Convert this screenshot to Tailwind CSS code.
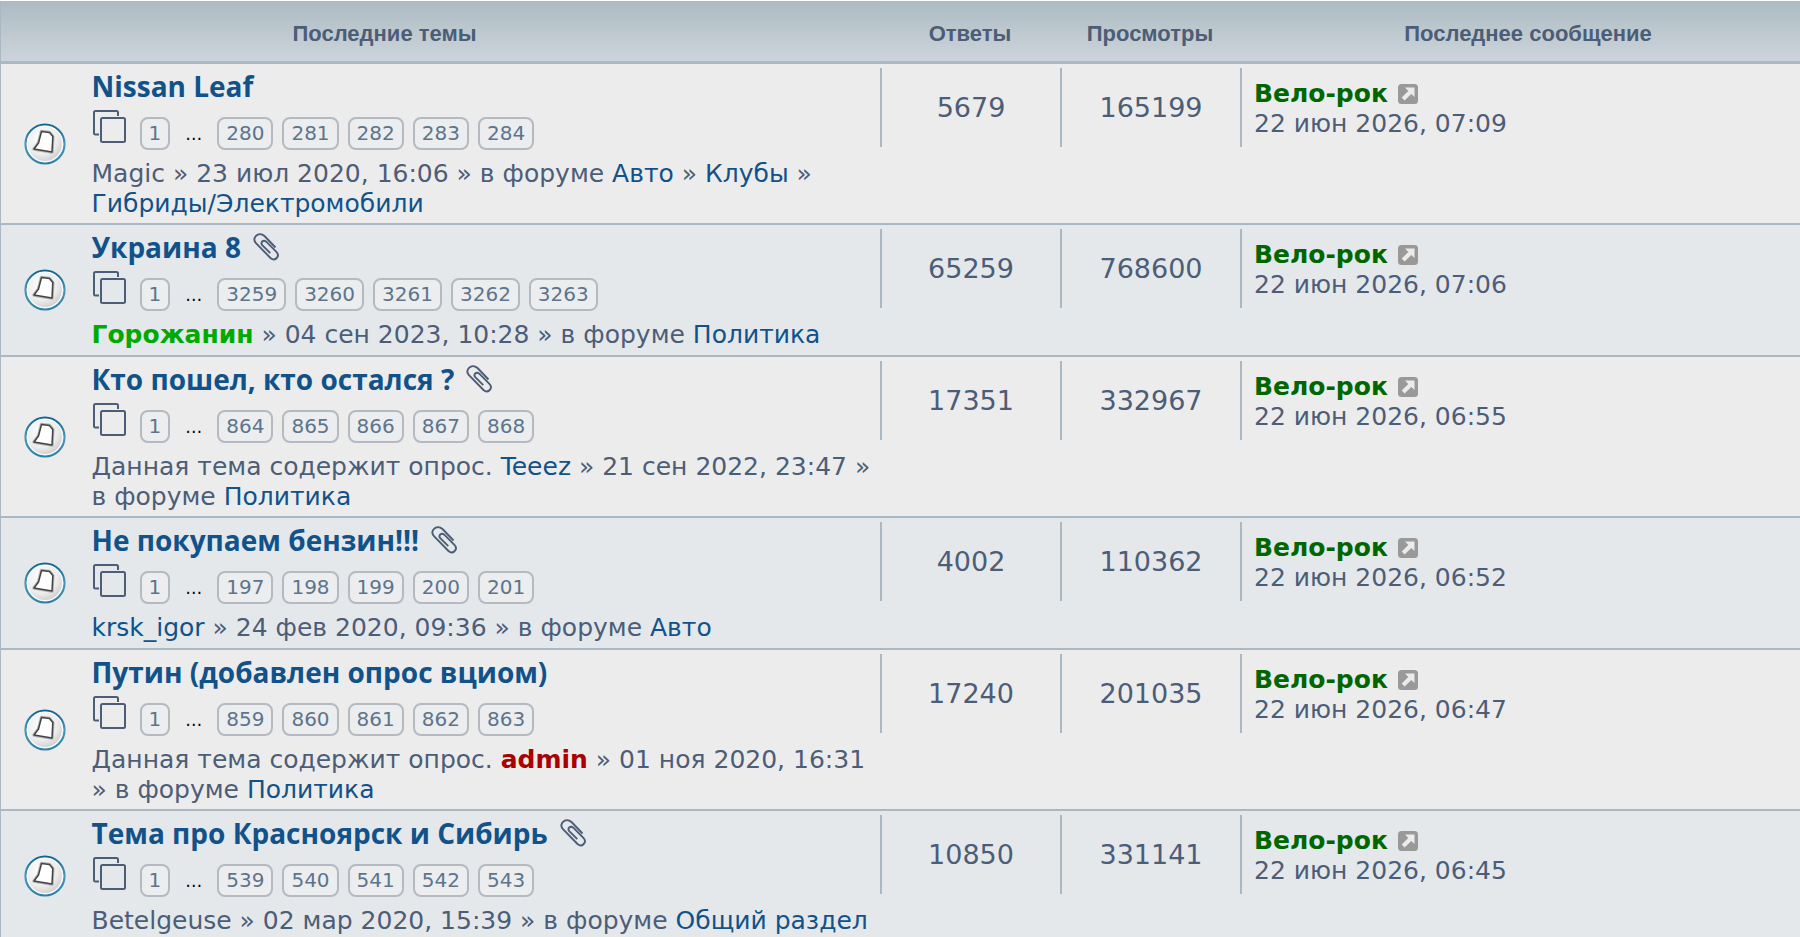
<!DOCTYPE html>
<html lang="ru">
<head>
<meta charset="utf-8">
<title>Последние темы</title>
<script src="https://cdn.jsdelivr.net/npm/@tailwindcss/browser@4"></script>
</head>
<body class="bg-white pt-px font-['DejaVu_Sans',sans-serif] text-[25px] leading-[30px] text-[#4c5d77]">
<svg class="absolute size-0" aria-hidden="true">
  <defs>
    <radialGradient id="disc" cx="0.4" cy="0.35" r="0.7"><stop offset="0" stop-color="#ffffff"/><stop offset="0.6" stop-color="#ececec"/><stop offset="1" stop-color="#c4c4c4"/></radialGradient>
    <linearGradient id="ring" x1="0" y1="0" x2="0" y2="1"><stop offset="0" stop-color="#0f6492"/><stop offset="0.5" stop-color="#4a96b8"/><stop offset="1" stop-color="#2a80a8"/></linearGradient>
  </defs>
  <symbol id="bell" viewBox="0 0 42 42">
    <circle cx="21" cy="21" r="19.5" fill="url(#disc)" stroke="url(#ring)" stroke-width="2.2"/>
    <circle cx="21" cy="21" r="17.6" fill="none" stroke="#f6fafc" stroke-width="1.4"/>
    <path d="M17.5 8.5 L25.5 9.5 L28.8 13.5 L28 29 L10 26 L14.5 20 Z" fill="#fff" stroke="#8a8a8a" stroke-opacity="0.6" stroke-width="3.4" stroke-linejoin="round"/>
    <path d="M17.5 8.5 L25.5 9.5 L28.8 13.5 L28 29 L10 26 L14.5 20 Z" fill="#fff" stroke="#444" stroke-width="1.5" stroke-linejoin="round"/>
  </symbol>
  <symbol id="pages" viewBox="0 0 34 34">
    <path d="M26 7 V3.5 Q26 2 24.5 2 H3.5 Q2 2 2 3.5 V24 Q2 25.5 3.5 25.5 H7" fill="none" stroke="#4c5d77" stroke-width="2"/>
    <rect x="9" y="9" width="24" height="24" rx="1.5" fill="none" stroke="#4c5d77" stroke-width="2"/>
  </symbol>
  <symbol id="clip" viewBox="0 0 26 28">
    <path d="M22.5 14.5 L11.5 3 C8.5 0.3 5 0.8 3 2.8 C0.8 5 1 8 3.2 10.4 L17.5 25 C19.5 26.8 22 26.8 23.7 25 C25.4 23.2 25.2 20.8 23.4 18.9 L13.3 8.7 C11.8 7.4 10.2 7.5 9.2 8.5 C8.2 9.6 8.2 11 9.5 12.4 L17.3 20.2" fill="none" stroke="#4c5d77" stroke-width="1.9"/>
  </symbol>
  <symbol id="go" viewBox="0 0 20 20">
    <rect width="20" height="20" rx="3.5" fill="#999"/>
    <path d="M7 3.5 H16.5 V13 L13.3 9.9 L6.6 16.5 L3.7 13.6 L10.3 6.9 Z" fill="#ebebeb"/>
  </symbol>
</svg>

<table class="w-full table-fixed border-collapse border-l border-[#a9b8c2]">
  <colgroup><col class="w-[91px]"><col><col class="w-[180px]"><col class="w-[180px]"><col class="w-[560px]"></colgroup>
  <thead>
    <tr class="h-[62px] border-b-2 border-[#a9b8c2] bg-linear-to-b from-[#acbac3] via-[#bdc8ce] to-[#cdd3dc] font-['Liberation_Sans',Arial,sans-serif] text-[22px] [&>th]:pt-1 [&>th]:font-bold">
      <th colspan="2" class="pr-[112px]">Последние темы</th>
      <th>Ответы</th>
      <th>Просмотры</th>
      <th class="pl-4">Последнее сообщение</th>
    </tr>
  </thead>
  <tbody class="[&>tr]:h-[132px] [&>tr]:border-b-2 [&>tr]:border-[#a9b8c2] [&>tr:nth-child(odd)]:bg-[#ececec] [&>tr:nth-child(even)]:bg-[#e4e8eb] [&_td]:align-top [&_td:first-child]:align-middle [&_a]:text-[#105289]">

    <tr>
      <td><svg class="ml-[23px] size-[42px]"><use href="#bell"/></svg></td>
      <td class="pt-1 pb-1 whitespace-nowrap">
        <div class="flex h-9 items-center gap-3 font-['Open_Sans',sans-serif] text-[28px] font-bold"><a href="#">Nissan Leaf</a></div>
        <div class="flex h-[50px] gap-[9px] pt-[13px] text-[20px] leading-[29px] [&>a]:h-[33px] [&>a]:rounded-lg [&>a]:border-2 [&>a]:border-[#b4bac0] [&>a]:bg-[#ecedee] [&>a]:px-[7px] [&>a]:text-[#5c758c]">
          <svg class="-mt-2 mr-[5px] size-[34px]"><use href="#pages"/></svg>
          <a href="#">1</a><span class="w-[29px] pt-[3px] text-center text-[17px] text-black">…</span><a href="#">280</a><a href="#">281</a><a href="#">282</a><a href="#">283</a><a href="#">284</a>
        </div>
        <div class="pt-[5px]">Magic » 23 июл 2020, 16:06 » в форуме <a href="#">Авто</a> » <a href="#">Клубы</a> »<br><a href="#">Гибриды/Электромобили</a></div>
      </td>
      <td class="pt-1"><div class="h-[79px] border-l-2 border-[#a9b8c2] pt-[25px] text-center text-[27px]">5679</div></td>
      <td class="pt-1"><div class="h-[79px] border-l-2 border-[#a9b8c2] pt-[25px] text-center text-[27px]">165199</div></td>
      <td class="pt-1"><div class="h-[79px] border-l-2 border-[#a9b8c2] pt-[11px] pl-3"><div class="flex items-center gap-2.5"><a href="#" class="font-bold text-[#006600]!">Вело-рок</a><a href="#" aria-label="Перейти к последнему сообщению"><svg class="size-5"><use href="#go"/></svg></a></div><div>22 июн 2026, 07:09</div></div></td>
    </tr>

    <tr>
      <td><svg class="ml-[23px] size-[42px]"><use href="#bell"/></svg></td>
      <td class="pt-1 pb-1 whitespace-nowrap">
        <div class="flex h-9 items-center gap-3 font-['Open_Sans',sans-serif] text-[28px] font-bold"><a href="#">Украина 8</a><svg class="h-7 w-[26px]"><use href="#clip"/></svg></div>
        <div class="flex h-[50px] gap-[9px] pt-[13px] text-[20px] leading-[29px] [&>a]:h-[33px] [&>a]:rounded-lg [&>a]:border-2 [&>a]:border-[#b4bac0] [&>a]:bg-[#ecedee] [&>a]:px-[7px] [&>a]:text-[#5c758c]">
          <svg class="-mt-2 mr-[5px] size-[34px]"><use href="#pages"/></svg>
          <a href="#">1</a><span class="w-[29px] pt-[3px] text-center text-[17px] text-black">…</span><a href="#">3259</a><a href="#">3260</a><a href="#">3261</a><a href="#">3262</a><a href="#">3263</a>
        </div>
        <div class="pt-[5px]"><a href="#" class="font-bold text-[#00aa00]!">Горожанин</a> » 04 сен 2023, 10:28 » в форуме <a href="#">Политика</a></div>
      </td>
      <td class="pt-1"><div class="h-[79px] border-l-2 border-[#a9b8c2] pt-[25px] text-center text-[27px]">65259</div></td>
      <td class="pt-1"><div class="h-[79px] border-l-2 border-[#a9b8c2] pt-[25px] text-center text-[27px]">768600</div></td>
      <td class="pt-1"><div class="h-[79px] border-l-2 border-[#a9b8c2] pt-[11px] pl-3"><div class="flex items-center gap-2.5"><a href="#" class="font-bold text-[#006600]!">Вело-рок</a><a href="#" aria-label="Перейти к последнему сообщению"><svg class="size-5"><use href="#go"/></svg></a></div><div>22 июн 2026, 07:06</div></div></td>
    </tr>

    <tr>
      <td><svg class="ml-[23px] size-[42px]"><use href="#bell"/></svg></td>
      <td class="pt-1 pb-1 whitespace-nowrap">
        <div class="flex h-9 items-center gap-3 font-['Open_Sans',sans-serif] text-[28px] font-bold"><a href="#">Кто пошел, кто остался ?</a><svg class="h-7 w-[26px]"><use href="#clip"/></svg></div>
        <div class="flex h-[50px] gap-[9px] pt-[13px] text-[20px] leading-[29px] [&>a]:h-[33px] [&>a]:rounded-lg [&>a]:border-2 [&>a]:border-[#b4bac0] [&>a]:bg-[#ecedee] [&>a]:px-[7px] [&>a]:text-[#5c758c]">
          <svg class="-mt-2 mr-[5px] size-[34px]"><use href="#pages"/></svg>
          <a href="#">1</a><span class="w-[29px] pt-[3px] text-center text-[17px] text-black">…</span><a href="#">864</a><a href="#">865</a><a href="#">866</a><a href="#">867</a><a href="#">868</a>
        </div>
        <div class="pt-[5px]">Данная тема содержит опрос. <a href="#">Teeez</a> » 21 сен 2022, 23:47 »<br>в форуме <a href="#">Политика</a></div>
      </td>
      <td class="pt-1"><div class="h-[79px] border-l-2 border-[#a9b8c2] pt-[25px] text-center text-[27px]">17351</div></td>
      <td class="pt-1"><div class="h-[79px] border-l-2 border-[#a9b8c2] pt-[25px] text-center text-[27px]">332967</div></td>
      <td class="pt-1"><div class="h-[79px] border-l-2 border-[#a9b8c2] pt-[11px] pl-3"><div class="flex items-center gap-2.5"><a href="#" class="font-bold text-[#006600]!">Вело-рок</a><a href="#" aria-label="Перейти к последнему сообщению"><svg class="size-5"><use href="#go"/></svg></a></div><div>22 июн 2026, 06:55</div></div></td>
    </tr>

    <tr>
      <td><svg class="ml-[23px] size-[42px]"><use href="#bell"/></svg></td>
      <td class="pt-1 pb-1 whitespace-nowrap">
        <div class="flex h-9 items-center gap-3 font-['Open_Sans',sans-serif] text-[28px] font-bold"><a href="#">Не покупаем бензин!!!</a><svg class="h-7 w-[26px]"><use href="#clip"/></svg></div>
        <div class="flex h-[50px] gap-[9px] pt-[13px] text-[20px] leading-[29px] [&>a]:h-[33px] [&>a]:rounded-lg [&>a]:border-2 [&>a]:border-[#b4bac0] [&>a]:bg-[#ecedee] [&>a]:px-[7px] [&>a]:text-[#5c758c]">
          <svg class="-mt-2 mr-[5px] size-[34px]"><use href="#pages"/></svg>
          <a href="#">1</a><span class="w-[29px] pt-[3px] text-center text-[17px] text-black">…</span><a href="#">197</a><a href="#">198</a><a href="#">199</a><a href="#">200</a><a href="#">201</a>
        </div>
        <div class="pt-[5px]"><a href="#">krsk_igor</a> » 24 фев 2020, 09:36 » в форуме <a href="#">Авто</a></div>
      </td>
      <td class="pt-1"><div class="h-[79px] border-l-2 border-[#a9b8c2] pt-[25px] text-center text-[27px]">4002</div></td>
      <td class="pt-1"><div class="h-[79px] border-l-2 border-[#a9b8c2] pt-[25px] text-center text-[27px]">110362</div></td>
      <td class="pt-1"><div class="h-[79px] border-l-2 border-[#a9b8c2] pt-[11px] pl-3"><div class="flex items-center gap-2.5"><a href="#" class="font-bold text-[#006600]!">Вело-рок</a><a href="#" aria-label="Перейти к последнему сообщению"><svg class="size-5"><use href="#go"/></svg></a></div><div>22 июн 2026, 06:52</div></div></td>
    </tr>

    <tr>
      <td><svg class="ml-[23px] size-[42px]"><use href="#bell"/></svg></td>
      <td class="pt-1 pb-1 whitespace-nowrap">
        <div class="flex h-9 items-center gap-3 font-['Open_Sans',sans-serif] text-[28px] font-bold"><a href="#">Путин (добавлен опрос вциом)</a></div>
        <div class="flex h-[50px] gap-[9px] pt-[13px] text-[20px] leading-[29px] [&>a]:h-[33px] [&>a]:rounded-lg [&>a]:border-2 [&>a]:border-[#b4bac0] [&>a]:bg-[#ecedee] [&>a]:px-[7px] [&>a]:text-[#5c758c]">
          <svg class="-mt-2 mr-[5px] size-[34px]"><use href="#pages"/></svg>
          <a href="#">1</a><span class="w-[29px] pt-[3px] text-center text-[17px] text-black">…</span><a href="#">859</a><a href="#">860</a><a href="#">861</a><a href="#">862</a><a href="#">863</a>
        </div>
        <div class="pt-[5px]">Данная тема содержит опрос. <a href="#" class="font-bold text-[#aa0000]!">admin</a> » 01 ноя 2020, 16:31<br>» в форуме <a href="#">Политика</a></div>
      </td>
      <td class="pt-1"><div class="h-[79px] border-l-2 border-[#a9b8c2] pt-[25px] text-center text-[27px]">17240</div></td>
      <td class="pt-1"><div class="h-[79px] border-l-2 border-[#a9b8c2] pt-[25px] text-center text-[27px]">201035</div></td>
      <td class="pt-1"><div class="h-[79px] border-l-2 border-[#a9b8c2] pt-[11px] pl-3"><div class="flex items-center gap-2.5"><a href="#" class="font-bold text-[#006600]!">Вело-рок</a><a href="#" aria-label="Перейти к последнему сообщению"><svg class="size-5"><use href="#go"/></svg></a></div><div>22 июн 2026, 06:47</div></div></td>
    </tr>

    <tr>
      <td><svg class="ml-[23px] size-[42px]"><use href="#bell"/></svg></td>
      <td class="pt-1 pb-1 whitespace-nowrap">
        <div class="flex h-9 items-center gap-3 font-['Open_Sans',sans-serif] text-[28px] font-bold"><a href="#">Тема про Красноярск и Сибирь</a><svg class="h-7 w-[26px]"><use href="#clip"/></svg></div>
        <div class="flex h-[50px] gap-[9px] pt-[13px] text-[20px] leading-[29px] [&>a]:h-[33px] [&>a]:rounded-lg [&>a]:border-2 [&>a]:border-[#b4bac0] [&>a]:bg-[#ecedee] [&>a]:px-[7px] [&>a]:text-[#5c758c]">
          <svg class="-mt-2 mr-[5px] size-[34px]"><use href="#pages"/></svg>
          <a href="#">1</a><span class="w-[29px] pt-[3px] text-center text-[17px] text-black">…</span><a href="#">539</a><a href="#">540</a><a href="#">541</a><a href="#">542</a><a href="#">543</a>
        </div>
        <div class="pt-[5px]">Betelgeuse » 02 мар 2020, 15:39 » в форуме <a href="#">Общий раздел</a></div>
      </td>
      <td class="pt-1"><div class="h-[79px] border-l-2 border-[#a9b8c2] pt-[25px] text-center text-[27px]">10850</div></td>
      <td class="pt-1"><div class="h-[79px] border-l-2 border-[#a9b8c2] pt-[25px] text-center text-[27px]">331141</div></td>
      <td class="pt-1"><div class="h-[79px] border-l-2 border-[#a9b8c2] pt-[11px] pl-3"><div class="flex items-center gap-2.5"><a href="#" class="font-bold text-[#006600]!">Вело-рок</a><a href="#" aria-label="Перейти к последнему сообщению"><svg class="size-5"><use href="#go"/></svg></a></div><div>22 июн 2026, 06:45</div></div></td>
    </tr>
  </tbody>
</table>
</body>
</html>
